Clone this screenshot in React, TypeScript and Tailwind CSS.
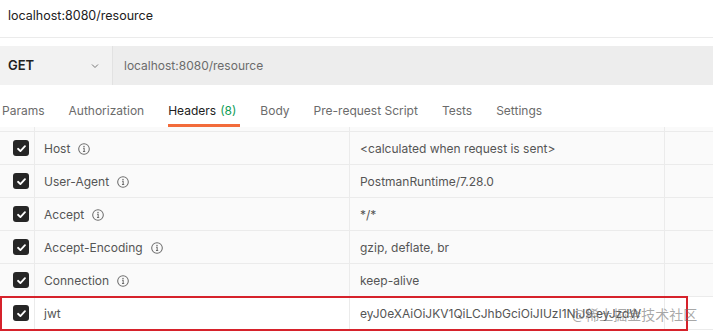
import React from 'react';

const tabs = [
  { label: 'Params' },
  { label: 'Authorization' },
  { label: 'Headers', count: '(8)', active: true },
  { label: 'Body' },
  { label: 'Pre-request Script' },
  { label: 'Tests' },
  { label: 'Settings' },
];

const headers = [
  { key: 'Host', value: '<calculated when request is sent>', info: true },
  { key: 'User-Agent', value: 'PostmanRuntime/7.28.0', info: true },
  { key: 'Accept', value: '*/*', info: true },
  { key: 'Accept-Encoding', value: 'gzip, deflate, br', info: true },
  { key: 'Connection', value: 'keep-alive', info: true },
  { key: 'jwt', value: 'eyJ0eXAiOiJKV1QiLCJhbGciOiJIUzI1NiJ9.eyJzdWIiOiJ1c2VyIn0', info: false },
];

function Checkbox() {
  return (
    <div className="w-4 h-4 rounded-[3px] bg-[#262626] flex items-center justify-center">
      <svg width="11" height="11" viewBox="0 0 12 12" fill="none">
        <path d="M2.2 6.3 L4.8 8.8 L9.8 3.4" stroke="#fff" strokeWidth="2" strokeLinecap="round" strokeLinejoin="round" />
      </svg>
    </div>
  );
}

function InfoIcon() {
  return (
    <svg width="12" height="12" viewBox="0 0 14 14" fill="none" className="ml-[8px]">
      <circle cx="7" cy="7" r="6.2" stroke="#6b6b6b" strokeWidth="1.2" />
      <circle cx="7" cy="4.1" r="0.85" fill="#6b6b6b" />
      <path d="M5.9 6.2 H7.2 V9.9 M5.8 9.9 H8.4" stroke="#6b6b6b" strokeWidth="1.2" />
    </svg>
  );
}

export default function App() {
  return (
    <div className="relative w-[713px] h-[336px] overflow-hidden bg-white font-['Inter',sans-serif]">
      {/* Request title */}
      <div className="h-[38px] pb-[5px] flex items-center px-2 text-[12.5px] text-[#212121] border-b border-[#ebebeb]">
        localhost:8080/resource
      </div>

      {/* Method + URL bar */}
      <div className="mt-[8px] h-[39px] flex">
        <div className="w-[113px] bg-[#f2f2f2] border-r border-[#e2e2e2] flex items-center justify-between pl-2 pr-[12px]">
          <span className="text-[13px] font-semibold text-[#212121]">GET</span>
          <svg width="10" height="10" viewBox="0 0 10 10" fill="none">
            <path d="M2 3.5 L5 6.5 L8 3.5" stroke="#777" strokeWidth="1" />
          </svg>
        </div>
        <div className="flex-1 bg-[#ededed] flex items-center pl-[11px] text-[12px] text-[#6b6b6b]">
          localhost:8080/resource
        </div>
      </div>

      {/* Tabs */}
      <div className="h-[42px] flex gap-[24px] pl-[2px]">
        {tabs.map((t) => (
          <div key={t.label} className="relative pt-[18px] leading-[16px]">
            <span className={`block text-[12px] leading-[16px] whitespace-nowrap ${t.active ? 'text-[#212121]' : 'text-[#6b6b6b]'}`}>
              {t.label}
              {t.count && <span className="text-[#0f9d58] ml-[4px]">{t.count}</span>}
            </span>
            {t.active && <div className="absolute left-0 -right-[4px] bottom-0 h-[3px] bg-[#f26b3a]" />}
          </div>
        ))}
      </div>

      {/* Headers table */}
      <div className="grid grid-cols-[35px_315px_315px_1fr] bg-[#fafafa] h-[5px] border-b border-[#ebebeb]">
        <div className="border-r border-[#ebebeb]" />
        <div className="border-r border-[#ebebeb]" />
        <div className="border-r border-[#ebebeb]" />
        <div />
      </div>
      {headers.map((h, i) => (
        <div
          key={h.key}
          className={`grid grid-cols-[35px_315px_315px_1fr] h-[33px] border-b border-[#ebebeb] ${i === headers.length - 1 ? 'bg-white' : 'bg-[#fafafa]'}`}
        >
          <div className="border-r border-[#ebebeb] flex items-center pl-[13px]">
            <Checkbox />
          </div>
          <div className="border-r border-[#ebebeb] flex items-center pl-[9px] pt-[2px] text-[12px] text-[#555]">
            <span>{h.key}</span>
            {h.info && <InfoIcon />}
          </div>
          <div className="border-r border-[#ebebeb] flex items-center pl-[10px] pt-[2px] text-[12px] text-[#555] overflow-hidden whitespace-nowrap">
            <span className="block overflow-hidden w-[282px]">{h.value}</span>
          </div>
          <div />
        </div>
      ))}

      {/* Highlight box */}
      <div className="absolute left-0 top-[296px] w-[688px] h-[35px] border-2 border-[#d6222b]" />

      {/* Watermark */}
      <div className="absolute left-[572px] top-[305px] text-[14px] leading-[18px] text-[rgba(110,110,110,0.6)] font-['Noto_Sans_CJK_SC',sans-serif] whitespace-nowrap">
        @稀土掘金技术社区
      </div>
    </div>
  );
}
